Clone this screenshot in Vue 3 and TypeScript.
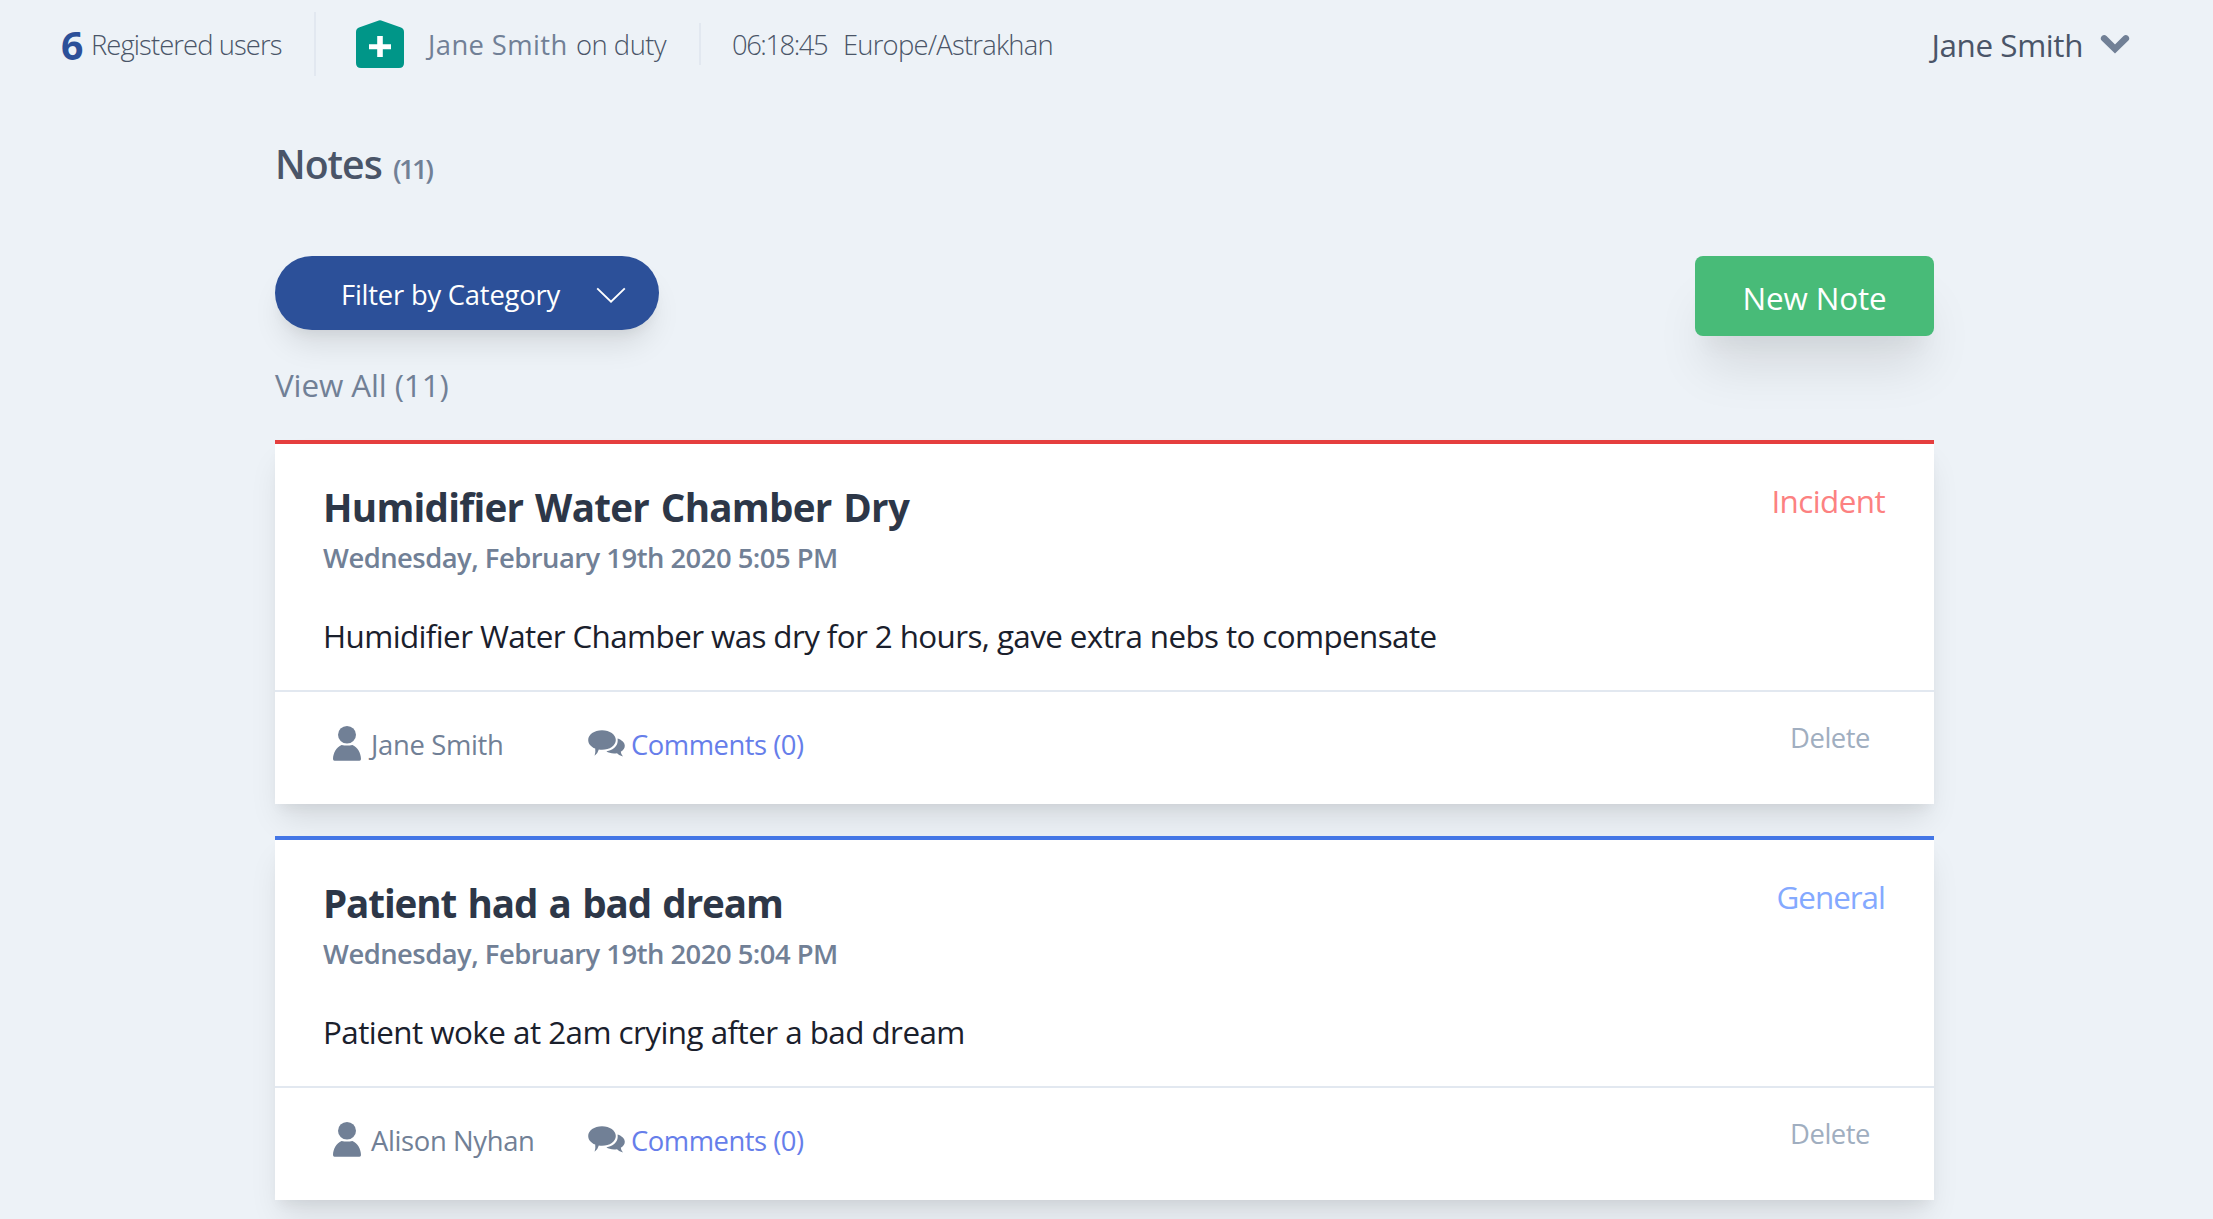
<script setup lang="ts">
interface Note {
  id: number
  title: string
  date: string
  body: string
  author: string
  category: 'Incident' | 'General'
  comments: number
}

const total = 11
const notes: Note[] = [
  {
    id: 1,
    title: 'Humidifier Water Chamber Dry',
    date: 'Wednesday, February 19th 2020 5:05 PM',
    body: 'Humidifier Water Chamber was dry for 2 hours, gave extra nebs to compensate',
    author: 'Jane Smith',
    category: 'Incident',
    comments: 0,
  },
  {
    id: 2,
    title: 'Patient had a bad dream',
    date: 'Wednesday, February 19th 2020 5:04 PM',
    body: 'Patient woke at 2am crying after a bad dream',
    author: 'Alison Nyhan',
    category: 'General',
    comments: 0,
  },
]
</script>

<template>
  <div class="page">
    <header class="topbar">
      <strong class="count">6</strong>
      <span class="users">Registered users</span>
      <i class="rule rule--tall"></i>
      <svg class="badge" width="48" height="48" viewBox="0 0 48 48">
        <path d="M22.8 .5Q24-.2 25.2 .5L45 7.6Q48 9 48 12V43Q48 48 43 48H5Q0 48 0 43V12Q0 9 3 7.6Z" fill="#009688" />
        <path d="M21.2 16h5.6v8.2H35v5h-8.2V37h-5.6v-7.8H13v-5h8.2Z" fill="#fff" />
      </svg>
      <span class="duty-name">Jane Smith</span>
      <span class="duty">on duty</span>
      <i class="rule"></i>
      <span class="clock">06:18:45</span>
      <span class="zone">Europe/Astrakhan</span>
      <button class="account" type="button">
        <span>Jane Smith</span>
        <svg width="30" height="20" viewBox="0 0 30 20">
          <path d="M4.2 4.4 15 15 25.8 4.4" fill="none" stroke="#718096" stroke-width="6.6" stroke-linecap="round" />
        </svg>
      </button>
    </header>

    <main class="content">
      <h1 class="heading">Notes <small>({{ total }})</small></h1>

      <div class="toolbar">
        <button class="filter" type="button">
          <span>Filter by Category</span>
          <svg width="30" height="18" viewBox="0 0 30 18">
            <path d="M1.2 1.4 15 14.6 28.8 1.4" fill="none" stroke="#fff" stroke-width="1.9" />
          </svg>
        </button>
        <button class="new-note" type="button">New Note</button>
      </div>

      <p class="view-all">View All ({{ total }})</p>

      <article v-for="note in notes" :key="note.id" class="note" :class="`note--${note.category.toLowerCase()}`">
        <div class="note-main">
          <div class="note-text">
            <h2>{{ note.title }}</h2>
            <p class="date">{{ note.date }}</p>
            <p class="body">{{ note.body }}</p>
          </div>
          <span class="category">{{ note.category }}</span>
        </div>
        <footer class="note-foot">
          <svg class="person" width="28" height="35" viewBox="0 0 28 35">
            <ellipse cx="14" cy="8.8" rx="9" ry="8.8" />
            <path d="M8.6 18.9Q14 20 19.4 18.9C24.500 21 28 27 28 33Q28 34.800 26.500 34.800H1.500Q0 34.800 0 33C0 27 3.500 21 8.600 18.900Z" />
          </svg>
          <span class="author">{{ note.author }}</span>
          <a class="comments">
            <svg width="37" height="27" viewBox="0 0 37 27">
              <path d="M14 .2C21.800 .2 27.800 4.500 27.800 10S21.800 19.800 14 19.800Q12.300 19.800 10.800 19.500Q9.800 23.500 6.600 25.800Q7.800 22 7.200 18.600C2.900 16.900 .2 13.700 .2 10C.2 4.500 6.200 .2 14 .2Z" />
              <path d="M29.600 8.400C34 9.900 36.800 12.500 36.800 15.800Q36.800 19.400 32.800 21.700Q33 24.500 35 26.600Q31.200 25.800 29 23.200C24.500 23.800 20.500 23 18.400 21.200C25 20.400 29.500 16.300 29.700 11Z" />
            </svg>
            <span>Comments ({{ note.comments }})</span>
          </a>
          <a class="delete">Delete</a>
        </footer>
      </article>
    </main>
  </div>
</template>

<style>
body {
  background: #edf2f7;
  overflow: hidden;
}
</style>

<style scoped>
.page {
  height: 1219px;
  overflow: hidden;
  background: #edf2f7;
  color: #1a202c;
  font-family: "Open Sans", "Noto Sans", sans-serif;
  font-size: 27.4px;
  line-height: 42px;
  white-space: nowrap;
}
h1, h2, p { margin: 0; }
button {
  border: 0;
  padding: 0;
  background: none;
  font: inherit;
  cursor: pointer;
}
svg { flex: none; display: block; }

.topbar {
  display: flex;
  align-items: center;
  height: 88px;
  padding: 0 83px 0 61px;
  color: #4a5568;
  font-weight: 300;
}
.topbar > * { flex: none; }
.topbar > span { padding-top: 2px; }
.count {
  width: 30px;
  padding-top: 2px;
  font-size: 39.2px;
  font-weight: 700;
  color: #2c5099;
}
.users { width: 223px; letter-spacing: -0.92px; }
.rule { width: 2px; height: 42px; background: #e2e8f0; }
.rule--tall { height: 64px; margin-right: 40px; }
.duty-name {
  width: 148px;
  margin-left: 24px;
  font-weight: 500;
  letter-spacing: 0.4px;
  color: #718096;
}
.duty { width: 123px; letter-spacing: -0.5px; }
.clock { width: 111px; margin-left: 31px; letter-spacing: -1.46px; }
.zone { letter-spacing: -0.78px; }
.account {
  display: flex;
  align-items: center;
  gap: 17px;
  margin-left: auto;
  padding-top: 1px;
  font-size: 31.4px;
  font-weight: 400;
  letter-spacing: -0.4px;
  color: #4a5568;
}
.account svg { margin-top: -1px; }

.content { width: 1659px; margin: 46px 0 0 275px; }
.heading {
  height: 60px;
  line-height: 60px;
  font-size: 39.2px;
  font-weight: 600;
  letter-spacing: -1px;
  color: #4a5568;
}
.heading small {
  margin-left: 2px;
  font-size: 27.4px;
  letter-spacing: -2.6px;
  color: #718096;
}
.toolbar {
  display: flex;
  justify-content: space-between;
  align-items: flex-start;
  margin-top: 62px;
}
.filter {
  display: flex;
  align-items: center;
  justify-content: space-between;
  width: 384px;
  height: 74px;
  padding: 3px 33px 0 66px;
  border-radius: 37px;
  background: #2c5099;
  color: #fff;
  letter-spacing: -0.22px;
  box-shadow: 0 20px 30px -6px rgba(0, 0, 0, 0.1), 0 8px 12px -4px rgba(0, 0, 0, 0.05);
}
.filter svg { margin-top: 3px; }
.new-note {
  width: 239px;
  height: 80px;
  padding-top: 3px;
  border-radius: 8px;
  background: #48bb78;
  color: #fff;
  font-size: 31.4px;
  letter-spacing: -0.15px;
  box-shadow: 0 40px 50px -10px rgba(0, 0, 0, 0.1), 0 20px 20px -10px rgba(0, 0, 0, 0.04);
}
.view-all {
  margin: 25px 0 31px;
  font-size: 31.4px;
  line-height: 48px;
  letter-spacing: -0.1px;
  color: #718096;
}

.note {
  margin-bottom: 32px;
  border-top: 4px solid;
  background: #fff;
  box-shadow: 0 20px 30px -6px rgba(0, 0, 0, 0.1), 0 8px 12px -4px rgba(0, 0, 0, 0.05);
}
.note--incident {
  --title-track: -0.74px;
  --body-track: -0.61px;
  --author-track: -0.32px;
  --category-track: -0.58px;
  --category: #fc8181;
  border-color: #e53e3e;
}
.note--general {
  --title-track: -1.12px;
  --body-track: -0.55px;
  --author-track: -0.36px;
  --category-track: -1px;
  --category: #84a9ff;
  border-color: #4376e6;
}
.note-main {
  display: flex;
  justify-content: space-between;
  height: 246px;
  padding: 33px 49px 0 48px;
  box-sizing: border-box;
}
.note h2 {
  padding-top: 1px;
  font-size: 38.6px;
  line-height: 59px;
  font-weight: 700;
  letter-spacing: var(--title-track);
  word-spacing: 2.5px;
  color: #2d3748;
}
.date {
  font-weight: 600;
  letter-spacing: -0.51px;
  color: #718096;
}
.body {
  margin-top: 33px;
  font-size: 31.4px;
  line-height: 48px;
  letter-spacing: var(--body-track);
}
.category {
  font-size: 31.4px;
  line-height: 48px;
  letter-spacing: var(--category-track);
  color: var(--category);
}
.note-foot {
  display: flex;
  align-items: flex-start;
  height: 80px;
  padding: 32px 64px 0 58px;
  border-top: 2px solid #e2e8f0;
  color: #718096;
}
.person { margin-top: 2px; fill: #718096; }
.author {
  width: 217px;
  margin-left: 10px;
  letter-spacing: var(--author-track);
}
.comments {
  display: flex;
  gap: 6px;
  color: #667eea;
  letter-spacing: -0.48px;
}
.comments svg { margin-top: 6px; fill: #718096; }
.delete {
  margin: -7px 0 0 auto;
  color: #a0aec0;
  letter-spacing: -0.46px;
}
</style>
